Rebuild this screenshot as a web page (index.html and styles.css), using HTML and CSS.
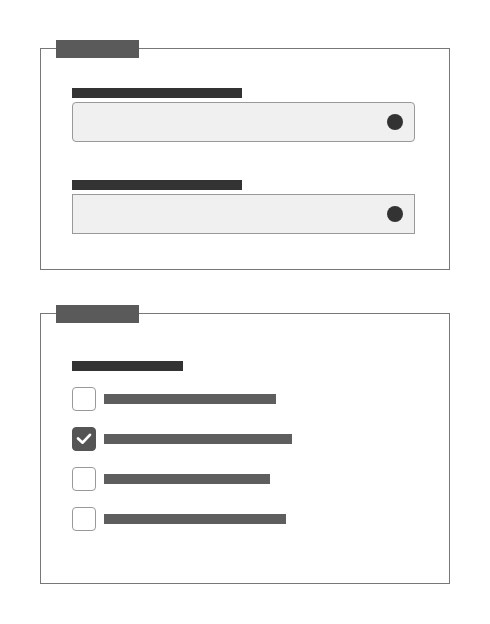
FILE: index.html
```html
<!DOCTYPE html>
<html lang="en">
<head>
    <meta charset="UTF-8">
    <meta name="viewport" content="width=device-width, initial-scale=1.0">
    <title>Form Wireframe</title>
    <link rel="stylesheet" href="styles.css">
</head>
<body>
    <div class="page">
        <section class="panel panel-fields">
            <div class="panel-tab"></div>

            <div class="field">
                <div class="field-label"></div>
                <div class="field-input rounded">
                    <span class="field-dot"></span>
                </div>
            </div>

            <div class="field">
                <div class="field-label"></div>
                <div class="field-input">
                    <span class="field-dot"></span>
                </div>
            </div>
        </section>

        <section class="panel panel-options">
            <div class="panel-tab"></div>

            <div class="group-label"></div>

            <ul class="option-list">
                <li class="option">
                    <span class="checkbox"></span>
                    <span class="option-text w1"></span>
                </li>
                <li class="option">
                    <span class="checkbox checked">
                        <svg viewBox="0 0 24 24" width="24" height="24">
                            <path d="M5.5 11.5 L10.5 16 L18.5 7.5" fill="none" stroke="#fff" stroke-width="3" stroke-linecap="round" stroke-linejoin="round"/>
                        </svg>
                    </span>
                    <span class="option-text w2"></span>
                </li>
                <li class="option">
                    <span class="checkbox"></span>
                    <span class="option-text w3"></span>
                </li>
                <li class="option">
                    <span class="checkbox"></span>
                    <span class="option-text w4"></span>
                </li>
            </ul>
        </section>
    </div>
</body>
</html>
```

FILE: styles.css
```css
* {
    margin: 0;
    padding: 0;
    box-sizing: border-box;
}

body {
    font-family: 'Liberation Sans', Arial, sans-serif;
    background: #fff;
}

.page {
    padding: 48px 0 0 40px;
}

.panel {
    position: relative;
    width: 410px;
    border: 1px solid #777;
    padding: 39px 34px 35px 31px;
}

.panel-options {
    margin-top: 43px;
    padding-top: 47px;
    padding-bottom: 52px;
}

/* tab sitting on the top border */
.panel-tab {
    position: absolute;
    top: -9px;
    left: 15px;
    width: 83px;
    height: 18px;
    background: #5a5a5a;
}

.field + .field {
    margin-top: 38px;
}

.field-label {
    width: 170px;
    height: 10px;
    background: #333;
}

.field-input {
    margin-top: 4px;
    height: 40px;
    border: 1px solid #999;
    background: #f1f0f0;
    display: flex;
    align-items: center;
    justify-content: flex-end;
    padding-right: 11px;
}

.field-input.rounded {
    border-radius: 4px;
}

.field-dot {
    width: 16px;
    height: 16px;
    border-radius: 50%;
    background: #333;
}

.group-label {
    width: 111px;
    height: 10px;
    background: #333;
}

.option-list {
    list-style: none;
    margin-top: 16px;
    display: flex;
    flex-direction: column;
    gap: 16px;
}

.option {
    display: flex;
    align-items: center;
    gap: 8px;
    height: 24px;
}

.checkbox {
    width: 24px;
    height: 24px;
    border: 1px solid #999;
    border-radius: 4px;
    background: #fff;
    display: flex;
    align-items: center;
    justify-content: center;
}

.checkbox.checked {
    background: #555;
    border-color: #555;
}

.checkbox svg {
    display: block;
}

.option-text {
    height: 10px;
    background: #5e5e5e;
}

.w1 { width: 172px; }
.w2 { width: 188px; }
.w3 { width: 166px; }
.w4 { width: 182px; }
```
